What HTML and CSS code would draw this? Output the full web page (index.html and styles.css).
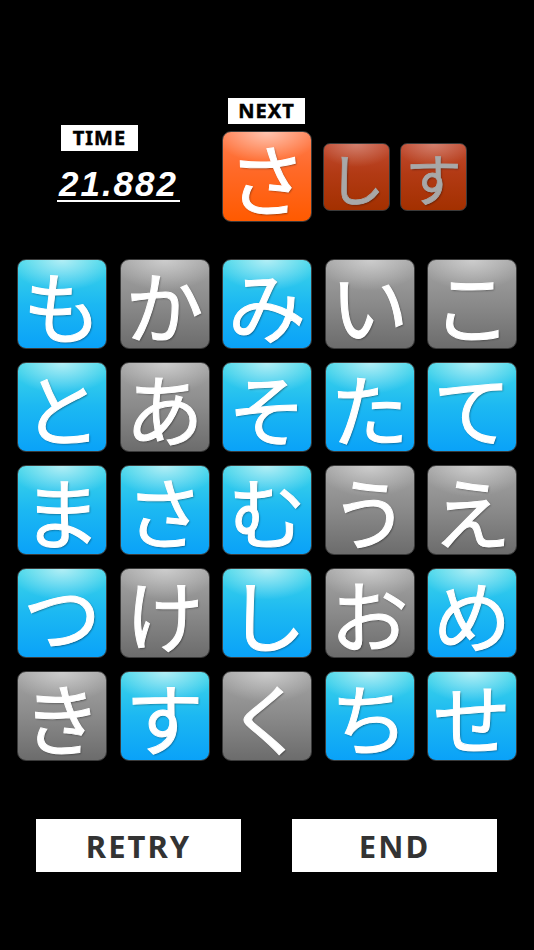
FILE: index.html
```html
<!DOCTYPE html>
<html lang="ja">
<head>
  <meta charset="UTF-8">
  <title>Hiragana Tap</title>
  <link rel="stylesheet" href="styles.css">
</head>
<body>

  <div class="header">
    <div class="time-block">
      <div class="label time-label">TIME</div>
      <div class="timer">21.882</div>
    </div>
    <div class="next-block">
      <div class="label next-label">NEXT</div>
      <div class="next-row">
        <div class="next-tile big">さ</div>
        <div class="next-tile small first">し</div>
        <div class="next-tile small">す</div>
      </div>
    </div>
  </div>

  <div class="board">
    <div class="tile blue">も</div>
    <div class="tile gray">か</div>
    <div class="tile blue">み</div>
    <div class="tile gray">い</div>
    <div class="tile gray">こ</div>

    <div class="tile blue">と</div>
    <div class="tile gray">あ</div>
    <div class="tile blue">そ</div>
    <div class="tile blue">た</div>
    <div class="tile blue">て</div>

    <div class="tile blue">ま</div>
    <div class="tile blue">さ</div>
    <div class="tile blue">む</div>
    <div class="tile gray">う</div>
    <div class="tile gray">え</div>

    <div class="tile blue">つ</div>
    <div class="tile gray">け</div>
    <div class="tile blue">し</div>
    <div class="tile gray">お</div>
    <div class="tile blue">め</div>

    <div class="tile gray">き</div>
    <div class="tile blue">す</div>
    <div class="tile gray">く</div>
    <div class="tile blue">ち</div>
    <div class="tile blue">せ</div>
  </div>

  <div class="buttons">
    <button class="btn">RETRY</button>
    <button class="btn">END</button>
  </div>

</body>
</html>
```

FILE: styles.css
```css
body {
  background-color: #000;
  margin: 0;
  font-family: 'Noto Sans', 'Noto Sans CJK JP', sans-serif;
}
.header {
  display: flex;
  padding-top: 98px;
  height: 125px;
}
.time-block {
  margin-left: 57px;
  width: 123px;
  padding-top: 27px;
}
.label {
  width: 77px;
  height: 26px;
  background-color: #fff;
  color: #000;
  font-weight: bold;
  font-size: 20px;
  line-height: 25px;
  letter-spacing: 1px;
  text-align: center;
  -webkit-text-stroke: 0.5px #000;
}
.time-label {
  margin-left: 4px;
}
.timer {
  margin-top: 17px;
  font-family: 'Liberation Sans', sans-serif;
  font-weight: bold;
  font-style: italic;
  font-size: 35px;
  line-height: 32px;
  letter-spacing: 2px;
  color: #fff;
  text-align: center;
  border-bottom: 2px solid #fff;
}
.next-block {
  margin-left: 42px;
}
.next-label {
  margin-left: 6px;
}
.next-row {
  display: flex;
  align-items: center;
  gap: 10px;
  margin-top: 7px;
}
.next-tile {
  font-family: 'Noto Sans CJK JP', sans-serif;
  display: flex;
  align-items: center;
  justify-content: center;
  box-sizing: border-box;
  border: 1px solid #3a3a3a;
  line-height: 1;
}
.next-tile.big {
  width: 90px;
  height: 91px;
  border-radius: 9px;
  font-size: 78px;
  color: #fff;
  -webkit-text-stroke: 1px #fff;
  text-shadow: 1px 1px 2px rgba(0, 0, 0, 0.45);
  background:
    radial-gradient(ellipse 60% 35% at 50% 0%, rgba(255, 255, 255, 0.55), rgba(255, 255, 255, 0)),
    linear-gradient(#ff7d4f, #ff6a2a 40%, #ff5a00);
}
.next-tile.small {
  width: 67px;
  height: 68px;
  border-radius: 7px;
  font-size: 56px;
  color: #a8a8a8;
  -webkit-text-stroke: 0.8px #a8a8a8;
  text-shadow: 1px 1px 2px rgba(0, 0, 0, 0.4);
  background:
    radial-gradient(ellipse 60% 35% at 50% 0%, rgba(255, 255, 255, 0.3), rgba(255, 255, 255, 0)),
    linear-gradient(#c04a30, #b23a14 45%, #a33000);
}
.next-tile.first {
  margin-left: 1px;
}
.board {
  display: grid;
  grid-template-columns: repeat(5, 90px);
  grid-auto-rows: 90px;
  column-gap: 12.5px;
  row-gap: 13px;
  margin: 36px 0 0 17px;
}
.tile {
  font-family: 'Noto Sans CJK JP', sans-serif;
  display: flex;
  align-items: center;
  justify-content: center;
  box-sizing: border-box;
  border: 1px solid #3a3a3a;
  border-radius: 9px;
  font-size: 78px;
  line-height: 1;
  color: #fff;
  -webkit-text-stroke: 1px #fff;
  text-shadow: 1px 1px 2px rgba(0, 0, 0, 0.45);
}
.tile.blue {
  background:
    radial-gradient(ellipse 60% 35% at 50% 0%, rgba(255, 255, 255, 0.6), rgba(255, 255, 255, 0)),
    linear-gradient(#3ed6e8, #1cb8f2 50%, #0aa2f8);
}
.tile.gray {
  background:
    radial-gradient(ellipse 60% 35% at 50% 0%, rgba(255, 255, 255, 0.45), rgba(255, 255, 255, 0)),
    linear-gradient(#a4a4a4, #8a8a8a 50%, #6c6c6c);
}
.buttons {
  display: flex;
  gap: 51px;
  margin: 58px 0 0 36px;
}
.btn {
  width: 205px;
  height: 53px;
  border: none;
  background-color: #fff;
  color: #333;
  font-family: 'Noto Sans', sans-serif;
  font-weight: bold;
  font-size: 31px;
  letter-spacing: 2px;
  padding: 0;
}
```
